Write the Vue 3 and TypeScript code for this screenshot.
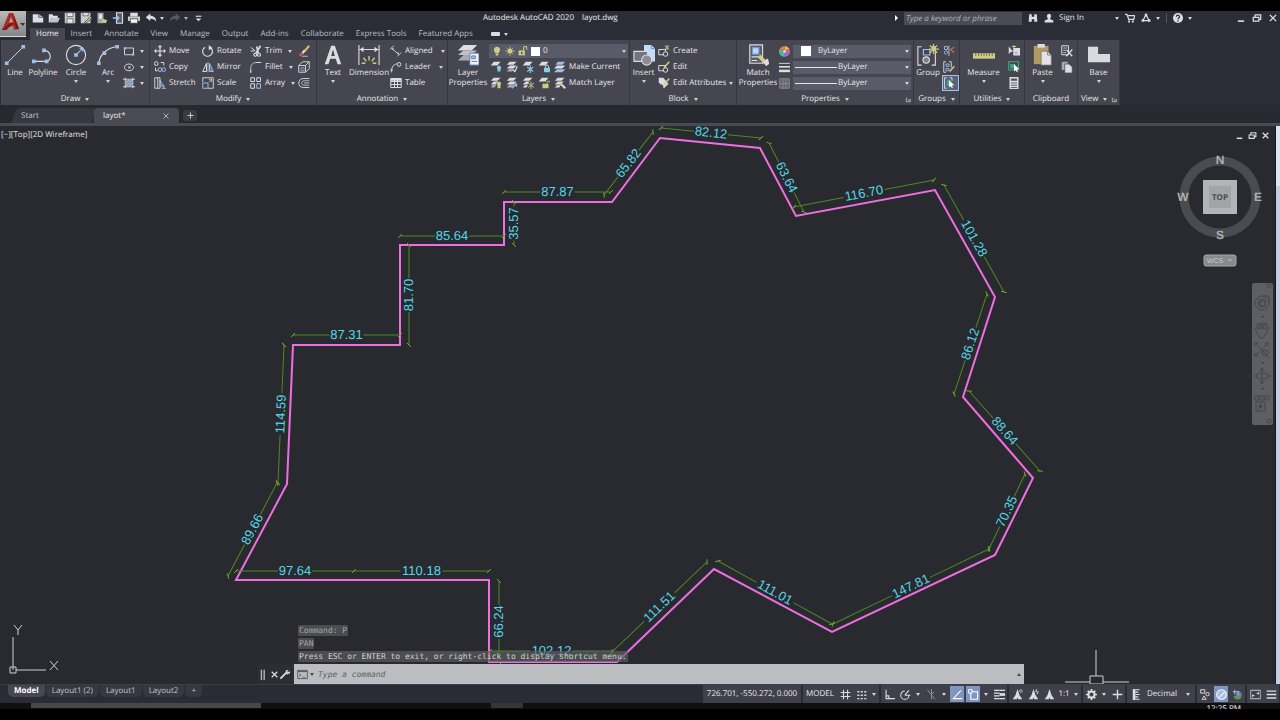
<script setup lang="ts">
import { h } from 'vue'

type Shape = [d: string, stroke?: string, fill?: string, width?: number]

const W = '#dddde1'
const B = '#9dbfe8'
const Y = '#cfcb84'
const G = '#3fa884'
const N = 'none'
const D = '#464651'

const icons: Record<string, Shape[]> = {
  // quick access
  newFile: [['M1 3h8l6 4v7H1z', N, W], ['M9 3v4h6', '#2b2e36', N, 1]],
  open: [['M1 3h5l1 2h6v3H5l-3 6H1z', N, W], ['M5 8h11l-3 6H2z', N, '#c4c4c8']],
  save: [['M1 1h14v14H1z', N, '#c9c9cd'], ['M4 1h8v5H4zM4 9h8v6H4z', '#55565c', '#ececee', 1]],
  saveAs: [['M1 1h13v14H1z', N, '#c9c9cd'], ['M4 1h7v4H4z', '#55565c', '#ececee', 1], ['M6 14l8-8 2 2-8 7z', '#3b3b3b', Y, 1]],
  openWeb: [['M2 1h8v14H2z', N, '#a5a6ab'], ['M4 3h4v6H4z', N, '#e5e5e5'], ['M9 9l6 2-2 4-5-1z', N, Y]],
  saveWeb: [['M6 1h8v14H6z', W, '#5c5d65', 1.5], ['M1 8h8M6 5l3 3-3 3', B, N, 2]],
  print: [['M3 1h10v5H3z', N, W], ['M0 6h16v6H0z', N, '#cfcfd3'], ['M3 9h10v6H3z', '#333', '#f4f4f4', 1]],
  undo: [['M7 2L1 7l6 5V9c4 0 6 1 8 4 0-5-3-8-8-8z', N, W]],
  redo: [['M9 2l6 5-6 5V9c-4 0-6 1-8 4 0-5 3-8 8-8z', N, '#62636b']],
  custom: [['M3 4h10', W, N, 2], ['M3 8h10l-5 5z', N, W]],
  // title bar
  binoculars: [['M2 2h4v4h4V2h4l1 12h-5v-4H6v4H1z', N, W]],
  person: [['M8 1a4 4 0 0 1 2 7v2l5 2v3H1v-3l5-2V8a4 4 0 0 1 2-7z', N, W]],
  cart: [['M0 2h3l3 8h8l2-6H5', W, N, 2], ['M5 12h3v3H5zM11 12h3v3h-3z', N, W]],
  tri: [['M8 3l5 9H3z', W, N, 2], ['M6 1h4v4H6zM1 10h4v4H1zM11 10h4v4h-4z', N, W]],
  help: [['M8 0a8 8 0 1 1 0 16A8 8 0 0 1 8 0z', N, W], ['M5.500 6c0-4 5-3 5 0 0 2-2.500 2-2.500 4M8 11.500v2', '#2b2e36', N, 2]],
  min: [['M3 13h10', W, N, 2.600]],
  restore: [['M2 7h9v6H2zM5 7V3h9v7h-3', W, N, 2]],
  close: [['M3 3l10 10M13 3L3 13', W, N, 2.200]],
  closeThin: [['M3 3l10 10M13 3L3 13', '#b9b9be', N, 1.800]],
  // draw
  line: [['M3 21L21 3', W, N, 1], ['M1 19h4v4H1zM19 1h4v4h-4z', N, B]],
  polyline: [['M2 19h14M12 7c10 0 10 12 3 12', W, N, 1.200], ['M0 17h4v4H0zM14 17h4v4h-4zM11 5h4v4h-4z', N, B]],
  circle: [['M12 1.500a10.500 10.500 0 1 1 0 21 10.500 10.500 0 0 1 0-21z', W, N, 1.200], ['M12 12l5-5', B, N, 1.200], ['M10 10h4v4h-4zM15 4l5 0 0 5z', N, B]],
  arc: [['M2 21C3 12 10 4 22 3', W, N, 1.200], ['M0 19h4v4H0zM6 8h4v4H6zM20 1h4v4h-4z', N, B]],
  rect: [['M2 4h12v9H2z', W, N, 1.200], ['M1 3h3v3H1zM12 11h3v3h-3z', N, B]],
  ellipse: [['M8 4c8 0 8 9 0 9s-8-9 0-9z', W, N, 1.200], ['M7 7h3v3H7z', N, B]],
  hatch: [['M3 1v14M13 1v14M0 3h16M0 13h16', W, N, 1.200], ['M4 4h8v8H4z', N, '#7795bd'], ['M4 8l4-4M4 12l8-8M8 12l4-4', W, N, 0.800]],
  // modify
  move: [['M8 2v12M2 8h12', W, N, 1.600], ['M8 0l3 3H5zM8 16l3-3H5zM0 8l3-3v6zM16 8l-3-3v6z', N, W]],
  copy: [['M3 1a2.500 2.500 0 1 1 0 5 2.500 2.500 0 0 1 0-5zM9 2h4v4M2 9v4h3', W, N, 1.300], ['M8 9a2.500 2.500 0 1 1 0 5 2.500 2.500 0 0 1 0-5zM13 9a2.500 2.500 0 1 1 0 5 2.500 2.500 0 0 1 0-5z', B, N, 1.300]],
  stretch: [['M1 1h7v14H1zM5 1v14', W, N, 1.200], ['M8 4l4 8H8zM13 10v5M10 15h6', B, N, 1.300]],
  rotate: [['M4 3a6.500 6.500 0 1 0 8 1', W, N, 1.500], ['M9 0l5 4-5 3z', N, W], ['M13 9h2v2h-2z', N, B]],
  mirror: [['M6 3v11H1z', W, N, 1.300], ['M10 3v11h5z', B, '#5b7295', 1.300], ['M8 1v14', W, N, 0.800]],
  scale: [['M1 1h14v14H8M1 1v6', W, N, 1.200], ['M1 8h7v7H1z', B, N, 1.300], ['M9 7l4-4M9 3h4v4', W, N, 1]],
  trim: [['M1 3l6 5M1 8h5', W, N, 1.300], ['M14 1L8 11M9 2l2 9', W, N, 2.200], ['M7 11a2 2 0 1 1 0 4 2 2 0 0 1 0-4zM12 11a2 2 0 1 1 0 4 2 2 0 0 1 0-4z', W, N, 1.500]],
  fillet: [['M1 15V9c0-4 3-7 7-7', B, N, 1.300], ['M8 2h7M1 12v4', W, N, 1.300]],
  array: [['M1 1h5v5H1zM9 1h5v5H9zM1 9h5v6H1z', W, N, 1.300], ['M9 9h5v6H9z', B, N, 1.300]],
  erase: [['M15 1l-6 7', '#d8b95f', N, 3], ['M9 7l-3 4', W, N, 3], ['M6 11l-4 3', '#d3555a', N, 3], ['M5 15h8', W, N, 1]],
  explode: [['M1 6h9v9H1zM1 6l5-5h9l-5 5M15 1v9l-5 5', W, N, 1.200], ['M4 9h4v4H4z', B, N, 1]],
  offset: [['M15 2H7c-8 0-8 12 0 12h8', W, N, 1.200], ['M15 5H8c-4 0-4 6 0 6h7', B, N, 1.200], ['M15 8H8', W, N, 1]],
  // annotation
  text: [['M3 22L10 2h4l7 20h-4l-2-6H9l-2 6zM10 13h4l-2-7z', N, W]],
  dimension: [['M1 1v22M23 1v22M1 6h22', W, N, 1.200], ['M2 6l4-3v6zM22 6l-4-3v6z', N, W], ['M12 13v5M6 15l3 4M18 15l-3 4M4 21l4 0M20 21h-4', Y, N, 1.500]],
  aligned: [['M2 4l10 9M5 1L0 6M15 10l-5 5', W, N, 1.200], ['M2 4l4 1-3 2zM12 13l-1-4-2 2z', N, B]],
  leader: [['M2 14C2 8 5 4 9 4', W, N, 1.300], ['M0 11h4l-2 5z', N, B], ['M12 2a2.500 2.500 0 1 1 0 5 2.500 2.500 0 0 1 0-5z', W, N, 1.300]],
  table: [['M1 2h14v12H1zM1 6h14M1 10h14M6 2v12M10 2v12', W, N, 1.300], ['M1 2h14v3H1z', N, W]],
  // layers
  layerProps: [['M7 1h15l-6 6H1z', N, W], ['M7 7h15l-6 5H1z', N, '#bfc0c5'], ['M7 12h15l-6 6H1z', N, '#a9aab0'], ['M14 10h10v13H14z', '#5a7cae', '#f1f2f5', 1], ['M16 13h4v3h-4z', '#4b76bb', '#a9c8f0', 1], ['M16 19h6', '#4b76bb', N, 1]],
  bulb: [['M8 1a5 5 0 0 1 3 9v2H5v-2a5 5 0 0 1 3-9z', N, Y], ['M6 13h4v2H6z', N, W]],
  sun: [['M8 4a4 4 0 1 1 0 8 4 4 0 0 1 0-8z', N, Y], ['M8 0v16M0 8h16M2.500 2.500l11 11M13.500 2.500l-11 11', Y, N, 1]],
  unlock: [['M1 7h10v8H1z', N, Y], ['M9 7V3c0-3 5-3 5 0v3', Y, N, 1.700], ['M5 9h2v4H5z', N, D]],
  lay1: [['M5 1h9l-4 5H1z', N, W], ['M12 6a3 3 0 0 1 2 5v3h-4v-3a3 3 0 0 1 2-5z', N, '#84cfe0']],
  lay2: [['M5 1h9l-4 4H1zM5 6h9l-4 4H1z', N, W], ['M5 10h6l-3 4H1z', N, '#a9aab0'], ['M9 12l3 2 3-7', W, N, 1.600]],
  lay3: [['M5 1h9l-4 5H1z', N, W], ['M11 6v10M7 8l8 6M15 8l-8 6', '#84cfe0', N, 1.500]],
  lay4: [['M5 1h9l-4 5H1z', N, W], ['M8 9h8v6H8z', N, '#84cfe0'], ['M10 9V7c0-2 4-2 4 0v2', W, N, 1.300]],
  lay5: [['M5 1h10l-4 4H2z', N, B], ['M4 6h11l-4 4H0z', N, W], ['M4 11h11l-4 4H0z', N, B]],
  lay6: [['M5 1h9l-4 4H1zM5 6h6l-4 4H1z', N, W], ['M4 10h5l-3 4H1z', N, '#a9aab0'], ['M12 6a3 3 0 0 1 2 5v4h-4v-4a3 3 0 0 1 2-5z', N, Y]],
  lay7: [['M5 1h9l-4 4H1zM5 6h9l-4 4H1z', N, W], ['M5 10h6l-3 4H1z', N, '#a9aab0'], ['M8 15l6-6M10 9h4v4', B, N, 1.600]],
  lay8: [['M5 1h9l-4 4H1zM5 6h5l-3 4H1zM4 11h4l-2 3H1z', N, W], ['M12 6v10M8 8l8 6M16 8l-8 6', Y, N, 1.200]],
  lay9: [['M5 1h9l-4 5H1z', N, W], ['M6 9h8v6H6z', N, Y], ['M12 9V7c0-2 4-2 4 0v1', Y, N, 1.300]],
  lay10: [['M5 1h9l-4 4H1zM5 6h8l-4 4H1zM4 11h5l-2 3H1z', N, W], ['M8 8l7 7', W, N, 2.600], ['M8 8l2 2', Y, N, 2.600]],
  // block
  insert: [['M12 1h8l4 4v14H12z', N, '#c3dcf7'], ['M20 1v4h4', '#6c8cb5', N, 1], ['M1 8h15v11H1z', W, '#73747d', 1.200], ['M15 12a5.500 5.500 0 1 1 0 11 5.500 5.500 0 0 1 0-11z', W, '#8b8c94', 1.200]],
  create: [['M1 6h9v7H1z', W, N, 1.300], ['M10 9a3 3 0 1 1 0 6 3 3 0 0 1 0-6z', W, D, 1.300], ['M12 0v7M9 1l6 5M15 1L9 6', Y, N, 1.200]],
  edit: [['M1 6h9v7H1z', W, N, 1.300], ['M10 9a3 3 0 1 1 0 6 3 3 0 0 1 0-6z', W, D, 1.300], ['M8 9l7-8', Y, N, 2]],
  attributes: [['M1 1h6l7 8-6 6-7-8z', N, W], ['M8 10l7-8', Y, N, 2], ['M4 10l3 3', D, N, 1.500]],
  // properties
  match: [['M3 1h14v20H3z', W, '#5d5e68', 1.200], ['M6 4h7v7H6z', '#6c9bd8', '#bcd8f8', 1.200], ['M5 14h9M5 18h6', W, N, 1.300], ['M13 13l6 6', Y, N, 4], ['M18 21l5-4M20 23l4-3', W, N, 3]],
  wheel: [['M8 8V0a8 8 0 0 1 7 4z', N, '#e8b55b'], ['M8 8l7-4a8 8 0 0 1 0 8z', N, '#d9647c'], ['M8 8l7 4a8 8 0 0 1-7 4z', N, '#a06cd0'], ['M8 8v8a8 8 0 0 1-7-4z', N, '#4fb6cf'], ['M8 8l-7 4a8 8 0 0 1 0-8z', N, '#57b978'], ['M8 8L1 4a8 8 0 0 1 7-4z', N, '#e07a55'], ['M8 6a2 2 0 1 1 0 4 2 2 0 0 1 0-4z', N, W]],
  weight: [['M0 2h16', W, N, 1.300], ['M0 7h16', W, N, 2.300], ['M0 13h16', W, N, 3.600]],
  ltype: [['M1 1h14v14H1zM6 1v14M10 1v14M1 8h14', '#8b8b92', '#66666f', 1.200]],
  // groups
  group: [['M5 3H1v20h4M16 3h4v20h-4', W, N, 1.200], ['M7 6h7v6H7z', B, N, 1.300], ['M10 14a3.500 3.500 0 1 1 0 7 3.500 3.500 0 0 1 0-7z', W, '#7e7f88', 1.200], ['M18 0v11M13 5.500h11M14 1.500l8 8M22 1.500l-8 8', Y, N, 1.400]],
  ungroup: [['M2 2h4v4H2zM2 9a2 2 0 1 1 4 2 2 2 0 0 1-4-2', B, N, 1.200], ['M8 1v14', W, N, 1], ['M10 6l5-3M10 6l5 4', '#d26a6a', N, 1.400]],
  groupEdit: [['M4 1H1v14h3M8 1h3v8', W, N, 1.200], ['M4 4h4v3H4zM4 10h4v3H4z', B, N, 1.200], ['M9 14l6-7', Y, N, 2]],
  groupSel: [['M5 1H2v14h3M9 1h3v4', W, N, 1.200], ['M5 4h4v8H5z', N, G], ['M8 4v10l2-2 2 3 1-1-1-3h3z', N, '#fff']],
  // utilities and clipboard
  measure: [['M0 10h24v6H0z', N, Y], ['M3 10v3M6 10v3M9 10v3M12 10v3M15 10v3M18 10v3M21 10v3', '#6c6a45', N, 1]],
  quick: [['M7 4h9v10H7z', N, W], ['M1 2v10l3-3h3z', N, W], ['M8 0v5M5 2h6', Y, N, 1.300], ['M9 9h4v3H9z', N, B]],
  selAll: [['M1 1h13v11H1z', G, N, 1.600], ['M3 4h6v6H3z', N, G], ['M8 4v10l2-2 2 3 1-1-1-3h3z', N, '#fff']],
  calc: [['M2 0h12v16H2z', N, W], ['M4 2h8v3H4z', N, '#55555f'], ['M4 8h8M4 11h8M4 14h8', '#55555f', N, 1.200]],
  paste: [['M2 2h16v20H2z', N, '#b09a64'], ['M6 0h8v4H6z', N, W], ['M10 8h7l4 4v11H10z', '#777', '#e2e2e4', 0.800], ['M17 8v4h4', '#777', N, 1]],
  cut: [['M1 1h9v12H1z', W, N, 1.300], ['M3 4h5M3 7h5M3 10h4', W, N, 1], ['M8 7l7 8M15 6l-8 9', W, N, 1.600]],
  copyClip: [['M1 1h8v11H1z', N, '#a9aab0'], ['M5 4h6l4 4v8H5z', D, W, 1]],
  base: [['M0 3h11v8h13v9H0z', N, '#d9dadd']],
  launcher: [['M3 4v9h9M6 6l6 6M12 7v5', W, N, 1.500]],
  // command line
  grip: [['M5 1v15M9 1v15', '#b5b5ba', N, 2]],
  wrench: [['M2 14l8-8', W, N, 2.600], ['M14 1l-4 1-1 4 3 2 4-2 0-3-3 2-1-1z', N, W]],
  prompt: [['M1 2h14v12H1z', '#5e5e63', N, 1.400], ['M1 3.500h14', '#5e5e63', N, 2], ['M3 7l3 2-3 2M8 12h4', '#5e5e63', N, 1.200]],
  // status bar
  grid: [['M5 1v14M11 1v14M1 5h14M1 11h14', W, N, 1.500]],
  snap: [['M2 3h3v2H2zM7 3h3v2H7zM12 3h3v2h-3zM2 8h3v2H2zM7 8h3v2H7zM12 8h3v2h-3zM2 13h3v2H2zM7 13h3v2H7zM12 13h3v2h-3z', N, W]],
  ortho: [['M3 1v13h13M3 10h4v4', W, N, 1.600]],
  polar: [['M7 3a6 6 0 1 0 6 6M7 9h8M7 9l6-7', W, N, 1.500]],
  iso: [['M2 1l11 14M8 0v15M12 4L8 8', '#8f9097', N, 1.400]],
  track: [['M13 2L2 14h13', '#fff', N, 1.500]],
  osnap: [['M4 4h10v11H4z', '#fff', N, 1.600], ['M1 1h5v5H1z', '#fff', '#7f95c2', 1.400]],
  lweight: [['M0 2h8M0 6h8M0 10h8M0 14h8', W, N, 1.800], ['M8 2h8M8 14h8', W, N, 1.800], ['M8 8h8', W, N, 4]],
  annoVis: [['M8 0l3 9 4 6H9l-1-3-1 3H1l4-6z', N, W], ['M13 1a2 2 0 1 1 0 4 2 2 0 0 1 0-4z', W, N, 1]],
  annoAuto: [['M8 0l3 9 4 6H9l-1-3-1 3H1l4-6z', N, W], ['M13 0l-2 4h4l-2 4', W, N, 1.200]],
  anno: [['M8 0l3 9 4 6H9l-1-3-1 3H1l4-6z', N, W]],
  gear: [['M8 3.500a4.500 4.500 0 1 1 0 9 4.500 4.500 0 0 1 0-9z', W, N, 3], ['M8 0v3M8 13v3M0 8h3M13 8h3M2.500 2.500l2 2M11.500 11.500l2 2M13.500 2.500l-2 2M4.500 11.500l-2 2', W, N, 2.400]],
  plus: [['M8 1v14M1 8h14', W, N, 2]],
  units: [['M4 0h4v16H4z', N, W], ['M8 1h6M8 4.500h4M8 8h6M8 11.500h4M8 15h6', W, N, 1.600]],
  quickProps: [['M1 1h6v5H1zM11 5a2.500 2.500 0 1 1 0 5 2.500 2.500 0 0 1 0-5zM6 10l3 5H3z', W, N, 1.400]],
  isolate: [['M8 1a7 7 0 1 1 0 14A7 7 0 0 1 8 1z', '#fff', '#a8bbe2', 1.500], ['M5 12l7-7', '#fff', N, 1.500]],
  hardware: [['M6 5h8v6H6z', N, '#5a83c8'], ['M2 11c3-2 9-2 12 1l-3 3H5z', N, '#5d9a4d'], ['M4 1v7M1 4h10M9 3v6', B, N, 1.500]],
  clean: [['M1 2h14v12H1z', '#a9aab0', N, 1.500], ['M9 7l4-3v4zM7 9l-4 3V8z', N, W]],
  menu: [['M1 3h14M1 8h14M1 13h14', W, N, 2]],
}

const Glyph = (props: { name: string; size?: number; box?: number }) => {
  const box = props.box ?? 16
  const size = props.size ?? 10
  return h(
    'svg',
    { width: size, height: size, viewBox: `0 0 ${box} ${box}`, 'aria-hidden': 'true', class: 'glyph' },
    icons[props.name].map(([d, stroke = W, fill = N, width = 1]) =>
      h('path', { d, stroke, fill, 'stroke-width': width }),
    ),
  )
}
Glyph.props = ['name', 'size', 'box']

const quickAccess = ['newFile', 'open', 'save', 'saveAs', 'openWeb', 'saveWeb', 'print']
const ribbonTabs = ['Home', 'Insert', 'Annotate', 'View', 'Manage', 'Output', 'Add-ins', 'Collaborate', 'Express Tools', 'Featured Apps']

interface Tool { icon: string; label?: string; menu?: boolean; name?: string; on?: boolean }
interface Panel { id: string; title: string; menu?: boolean; launcher?: boolean; big: Tool[]; columns: Tool[][] }

const panels: Panel[] = [
  {
    id: 'draw', title: 'Draw', menu: true,
    big: [{ icon: 'line', label: 'Line' }, { icon: 'polyline', label: 'Polyline' }, { icon: 'circle', label: 'Circle', menu: true }, { icon: 'arc', label: 'Arc', menu: true }],
    columns: [[{ icon: 'rect', name: 'Rectangle', menu: true }, { icon: 'ellipse', name: 'Ellipse', menu: true }, { icon: 'hatch', name: 'Hatch', menu: true }]],
  },
  {
    id: 'modify', title: 'Modify', menu: true, big: [],
    columns: [
      [{ icon: 'move', label: 'Move' }, { icon: 'copy', label: 'Copy' }, { icon: 'stretch', label: 'Stretch' }],
      [{ icon: 'rotate', label: 'Rotate' }, { icon: 'mirror', label: 'Mirror' }, { icon: 'scale', label: 'Scale' }],
      [{ icon: 'trim', label: 'Trim', menu: true }, { icon: 'fillet', label: 'Fillet', menu: true }, { icon: 'array', label: 'Array', menu: true }],
      [{ icon: 'erase', name: 'Erase' }, { icon: 'explode', name: 'Explode' }, { icon: 'offset', name: 'Offset' }],
    ],
  },
  {
    id: 'annotation', title: 'Annotation', menu: true,
    big: [{ icon: 'text', label: 'Text', menu: true }, { icon: 'dimension', label: 'Dimension' }],
    columns: [[{ icon: 'aligned', label: 'Aligned', menu: true }, { icon: 'leader', label: 'Leader', menu: true }, { icon: 'table', label: 'Table' }]],
  },
  { id: 'layers', title: 'Layers', menu: true, big: [{ icon: 'layerProps', label: 'Layer\nProperties' }], columns: [] },
  {
    id: 'block', title: 'Block', menu: true,
    big: [{ icon: 'insert', label: 'Insert', menu: true }],
    columns: [[{ icon: 'create', label: 'Create' }, { icon: 'edit', label: 'Edit' }, { icon: 'attributes', label: 'Edit Attributes', menu: true }]],
  },
  { id: 'properties', title: 'Properties', menu: true, launcher: true, big: [{ icon: 'match', label: 'Match\nProperties' }], columns: [] },
  {
    id: 'groups', title: 'Groups', menu: true,
    big: [{ icon: 'group', label: 'Group' }],
    columns: [[{ icon: 'ungroup', name: 'Ungroup' }, { icon: 'groupEdit', name: 'Group edit' }, { icon: 'groupSel', name: 'Group selection', on: true }]],
  },
  {
    id: 'utilities', title: 'Utilities', menu: true,
    big: [{ icon: 'measure', label: 'Measure', menu: true }],
    columns: [[{ icon: 'quick', name: 'Quick select' }, { icon: 'selAll', name: 'Select all' }, { icon: 'calc', name: 'Calculator' }]],
  },
  {
    id: 'clipboard', title: 'Clipboard',
    big: [{ icon: 'paste', label: 'Paste', menu: true }],
    columns: [[{ icon: 'cut', name: 'Cut' }, { icon: 'copyClip', name: 'Copy clip' }]],
  },
  { id: 'view', title: 'View', menu: true, launcher: true, big: [{ icon: 'base', label: 'Base', menu: true }], columns: [] },
]

const layerRows: Tool[][] = [
  [{ icon: 'lay1', name: 'Off' }, { icon: 'lay2', name: 'Isolate' }, { icon: 'lay3', name: 'Freeze' }, { icon: 'lay4', name: 'Lock' }, { icon: 'lay5', label: 'Make Current' }],
  [{ icon: 'lay6', name: 'On' }, { icon: 'lay7', name: 'Unisolate' }, { icon: 'lay8', name: 'Thaw' }, { icon: 'lay9', name: 'Unlock' }, { icon: 'lay10', label: 'Match Layer' }],
]
const propertyRows = [
  { icon: 'wheel', name: 'Object color', swatch: true },
  { icon: 'weight', name: 'Lineweight', swatch: false },
  { icon: 'ltype', name: 'Linetype', swatch: false },
]

const outline: [number, number][] = [
  [236, 580], [489, 580], [489, 662], [617, 662], [714, 569], [832, 632], [995, 555], [1033, 478],
  [963, 397], [995, 297], [935, 190], [796, 216], [760, 148], [660, 138], [612, 202], [504, 202],
  [504, 245], [400, 245], [400, 345], [293, 345], [287, 484],
]
const outlinePoints = outline.map((p) => p.join(',')).join(' ')

// Each dimension runs in its text's reading direction.
const dimensionData: [number, number, number, number, string][] = [
  [661, 128, 761, 138, '82.12'], [604, 195, 653, 132, '65.82'], [769, 143, 804, 212, '63.64'],
  [794, 207, 934, 180, '116.70'], [944, 185, 1004, 292, '101.28'], [954, 394, 987, 294, '86.12'],
  [969, 391, 1040, 471, '88.64'], [989, 549, 1025, 474, '70.35'], [833, 624, 989, 549, '147.81'],
  [718, 561, 832, 624, '111.01'], [612, 652, 707, 562, '111.51'], [490, 651, 613, 651, '102.12'],
  [499, 662, 499, 581, '66.24'], [236, 571, 354, 571, '97.64'], [354, 571, 489, 571, '110.18'],
  [228, 576, 277, 483, '89.66'], [278, 483, 284, 345, '114.59'], [293, 335, 400, 335, '87.31'],
  [409, 345, 409, 245, '81.70'], [400, 236, 504, 236, '85.64'], [514, 245, 514, 202, '35.57'],
  [504, 192, 611, 192, '87.87'],
]
const dimensions = dimensionData.map(([x1, y1, x2, y2, text]) => {
  const length = Math.hypot(x2 - x1, y2 - y1)
  const gap = text.length === 5 ? 17 : 21
  return {
    text,
    place: `translate(${(x1 + x2) / 2} ${(y1 + y2) / 2}) rotate(${(Math.atan2(y2 - y1, x2 - x1) * 180) / Math.PI})`,
    lines: `M${-length / 2} 0H${-gap}M${gap} 0H${length / 2}`,
    ticks: `M${-length / 2 - 2} 2l4-4M${length / 2 - 2} 2l4-4`,
  }
})

const history = ['Command: P', 'PAN', 'Press ESC or ENTER to exit, or right-click to display shortcut menu.']
const layouts = ['Model', 'Layout1 (2)', 'Layout1', 'Layout2', '+']

interface Status { icon?: string; text?: string; kind?: string; on?: boolean; name?: string }
const statusGroups: Status[][] = [
  [{ text: '726.701, -550.272, 0.000', kind: 'coords' }],
  [{ text: 'MODEL', kind: 'space' }, { icon: 'grid', name: 'Grid' }, { icon: 'snap', name: 'Snap' }, { kind: 'drop', name: 'Snap options' }],
  [{ icon: 'ortho', name: 'Ortho' }, { icon: 'polar', name: 'Polar' }, { kind: 'drop', name: 'Polar options' }, { icon: 'iso', name: 'Isodraft' }, { kind: 'drop', name: 'Isodraft options' }, { icon: 'track', on: true, name: 'Tracking' }, { icon: 'osnap', on: true, name: 'Object snap' }, { kind: 'drop', name: 'Object snap options' }, { icon: 'lweight', name: 'Lineweight' }],
  [{ icon: 'annoVis', name: 'Annotation visibility' }, { icon: 'annoAuto', name: 'Auto scale' }, { icon: 'anno', name: 'Annotation scale' }, { text: '1:1', kind: 'ratio' }, { kind: 'drop', name: 'Scale list' }],
  [{ icon: 'gear', name: 'Workspace' }, { kind: 'drop', name: 'Workspace list' }, { icon: 'plus', name: 'Annotation monitor' }],
  [{ icon: 'units', name: 'Units' }, { text: 'Decimal', kind: 'units' }, { kind: 'drop', name: 'Units list' }],
  [{ icon: 'quickProps', name: 'Quick properties' }, { icon: 'isolate', on: true, name: 'Isolate objects' }, { icon: 'hardware', name: 'Hardware acceleration' }],
  [{ icon: 'clean', name: 'Clean screen' }, { icon: 'menu', name: 'Customization' }],
]
</script>

<template>
  <div class="screen">
    <header class="header">
      <button class="logo" aria-label="Application menu">
        <svg width="26" height="26" viewBox="0 0 26 26" aria-hidden="true">
          <path d="M2 19L9 2h4l6 16-5 1-1-4-5 1-2 3zM9 12l4-1-2-5z" fill="#b02a24" fill-rule="evenodd" />
          <path d="M2 19l8-7 4 0-8 7zM13 2l6 16-3 0z" fill="#7d1512" />
          <path d="M20 12h5l-2 3z" fill="#333" />
        </svg>
      </button>
      <div class="head-rows">
        <div class="titlebar">
          <div class="quick">
            <button v-for="q in quickAccess" :key="q" class="quick-btn" :aria-label="q"><Glyph :name="q" :size="12" /></button>
            <button class="undo-btn" aria-label="Undo"><Glyph name="undo" :size="12" /><i class="caret" /></button>
            <button class="undo-btn dim" aria-label="Redo"><Glyph name="redo" :size="12" /><i class="caret" /></button>
            <button class="quick-btn" aria-label="Customize"><Glyph name="custom" :size="9" /></button>
          </div>
          <h1 class="doc-title"><span>Autodesk AutoCAD 2020</span><span>layot.dwg</span></h1>
          <div class="title-tools">
            <i class="side-caret" />
            <input class="search" type="text" aria-label="Search" placeholder="Type a keyword or phrase" />
            <button aria-label="Find"><Glyph name="binoculars" /></button>
            <button class="signin"><Glyph name="person" /><span>Sign In</span><i class="caret" /></button>
            <button aria-label="Store"><Glyph name="cart" /></button>
            <button aria-label="Apps"><Glyph name="tri" /><i class="caret" /></button>
            <button class="help" aria-label="Help"><Glyph name="help" /><i class="caret" /></button>
            <div class="window-btns">
              <button aria-label="Minimize"><Glyph name="min" /></button>
              <button aria-label="Restore"><Glyph name="restore" /></button>
              <button aria-label="Close"><Glyph name="close" /></button>
            </div>
          </div>
        </div>
        <nav class="ribbon-tabs">
          <button v-for="(t, i) in ribbonTabs" :key="t" :class="['ribbon-tab', { current: i === 0 }]">{{ t }}</button>
          <button class="ribbon-toggle" aria-label="Minimize ribbon"><i class="pill" /><i class="caret" /></button>
        </nav>
      </div>
    </header>

    <section class="ribbon">
      <div v-for="p in panels" :key="p.id" :class="['panel', p.id]">
        <div class="panel-body">
          <button v-for="b in p.big" :key="b.icon" class="big">
            <Glyph :name="b.icon" :size="22" :box="24" />
            <span>{{ b.label }}</span>
            <i v-if="b.menu" class="caret" />
          </button>
          <div v-for="(c, i) in p.columns" :key="i" class="column">
            <button v-for="t in c" :key="t.icon" :class="['tool', { on: t.on }]" :aria-label="t.name">
              <Glyph :name="t.icon" :size="12" /><span v-if="t.label">{{ t.label }}</span><i v-if="t.menu" class="caret" />
            </button>
          </div>
          <div v-if="p.id === 'layers'" class="column">
            <div class="combo layer-combo">
              <Glyph name="bulb" /><Glyph name="sun" /><Glyph name="unlock" /><i class="swatch" />
              <select aria-label="Layer"><option>0</option></select><i class="caret" />
            </div>
            <div v-for="(r, i) in layerRows" :key="i" class="layer-row">
              <button v-for="t in r" :key="t.icon" class="tool" :aria-label="t.name"><Glyph :name="t.icon" :size="12" /><span v-if="t.label">{{ t.label }}</span></button>
            </div>
          </div>
          <div v-if="p.id === 'properties'" class="column">
            <div v-for="r in propertyRows" :key="r.name" class="property">
              <Glyph :name="r.icon" :size="11" />
              <div class="combo">
                <i v-if="r.swatch" class="swatch wide" /><i v-else class="stroke-sample" />
                <select :aria-label="r.name"><option>ByLayer</option></select><i class="caret" />
              </div>
            </div>
          </div>
        </div>
        <div class="panel-title"><span>{{ p.title }}</span><i v-if="p.menu" class="caret" /><Glyph v-if="p.launcher" name="launcher" :size="7" class="launcher" /></div>
      </div>
    </section>

    <nav class="file-tabs">
      <button class="file-tab start"><span>Start</span></button>
      <button class="file-tab current"><span>layot*</span><Glyph name="closeThin" :size="8" /></button>
      <button class="add-tab" aria-label="New drawing"><Glyph name="plus" :size="7" /></button>
    </nav>

    <main class="canvas">
      <svg class="drawing" viewBox="0 126 1280 558" preserveAspectRatio="xMinYMin slice" role="img" aria-label="Site outline with dimensions">
        <polygon :points="outlinePoints" class="outline" />
        <g v-for="d in dimensions" :key="d.text" :transform="d.place">
          <path :d="d.lines" class="dim-line" />
          <path :d="d.ticks" class="dim-tick" />
          <text class="dim-text" y="4">{{ d.text }}</text>
        </g>
        <path d="M13 637V670M16 670H46M10 667h6v6h-6zM14 625l4 5 4-5M18 630v5M50 661l8 9M58 661l-8 9" class="ucs" />
        <path d="M1096 650V676M1065 682H1090M1103 682H1129M1090 676h13v8h-13z" class="ucs" />
      </svg>
      <div class="view-label">[−][Top][2D Wireframe]</div>
      <div class="doc-btns">
        <button aria-label="Minimize drawing"><Glyph name="min" :size="9" /></button>
        <button aria-label="Restore drawing"><Glyph name="restore" :size="9" /></button>
        <button aria-label="Close drawing"><Glyph name="close" :size="9" /></button>
      </div>
      <svg class="cube" viewBox="0 0 92 120" width="92" height="120" role="img" aria-label="View cube">
        <circle cx="46" cy="46" r="36" fill="none" stroke="#4b4c50" stroke-width="9" />
        <rect x="29" y="29" width="34" height="34" fill="#b3b4b5" />
        <rect x="35" y="35" width="22" height="22" fill="#a3a4a6" />
        <text x="46" y="49" class="cube-top">TOP</text>
        <text x="46" y="13" class="compass">N</text>
        <text x="46" y="88" class="compass">S</text>
        <text x="9" y="50" class="compass">W</text>
        <text x="84" y="50" class="compass">E</text>
        <rect x="30" y="104" width="32" height="11" rx="2" fill="#88898b" stroke="#a5a6a8" />
        <text x="41" y="112" class="wcs">WCS</text>
        <path d="M53 108h6l-3 3z" fill="#a5a6a8" />
      </svg>
      <svg class="navbar" viewBox="0 0 21 142" width="21" height="142" role="img" aria-label="Navigation bar">
        <rect width="21" height="142" rx="2" fill="#5d5f62" />
        <g fill="none" stroke="#45474a" stroke-width="1">
          <circle cx="17" cy="3" r="2" /><circle cx="17" cy="138" r="2" />
          <circle cx="10" cy="20" r="7" /><circle cx="10" cy="20" r="4" /><path d="M8 18h5v5H8zM11 13h6v6" />
          <path d="M5 50l-2-5 2-1 2 3-2-6 2-1 2 6V40h2v6l2-6 2 1-2 6 3-3 1 1-4 7-2 3H8z" />
          <path d="M4 60l12 14M16 60L3 73M3 63v-3h3M13 60h3v3M3 70v3h3" /><circle cx="13" cy="70" r="3" /><path d="M15 73l3 3" />
          <path d="M10 86v14M8 88l2-3 2 3M8 98l2 3 2-3M4 93c0-4 13-4 13 0s-13 4-13 0M2 93h4M15 93h4" />
          <path d="M3 113h4v4H3zM8 113h4v4H8zM13 113h4v4h-4zM4 119h9v9H4z" />
        </g>
        <path d="M7 121l4 2-4 3zM9 33h4l-2 2zM9 79h4l-2 2zM9 105h4l-2 2z" fill="#3f4144" />
      </svg>
      <div class="edge" />
      <div class="command">
        <p v-for="l in history" :key="l" class="history"><span>{{ l }}</span></p>
        <div class="command-line">
          <div class="command-tools">
            <Glyph name="grip" :size="11" /><button aria-label="Close command line"><Glyph name="close" :size="9" /></button><button aria-label="Customize command line"><Glyph name="wrench" :size="11" /></button>
          </div>
          <div class="command-field">
            <Glyph name="prompt" :size="11" /><i class="caret dark" />
            <input type="text" aria-label="Command" placeholder="Type a command" />
            <i class="caret dark up" />
          </div>
        </div>
      </div>
    </main>

    <footer class="status">
      <nav class="layouts">
        <button v-for="(l, i) in layouts" :key="l" :class="['layout', { current: i === 0 }]">{{ l }}</button>
      </nav>
      <div class="status-tools">
        <div v-for="(g, i) in statusGroups" :key="i" class="status-group">
          <button v-for="(s, j) in g" :key="j" :class="['cell', s.kind, { on: s.on }]" :aria-label="s.name">
            <Glyph v-if="s.icon" :name="s.icon" :size="11" /><i v-else-if="s.kind === 'drop'" class="caret" /><template v-else>{{ s.text }}</template>
          </button>
        </div>
      </div>
    </footer>
    <div class="taskbar"><i class="task first" /><i class="task second" /><span class="clock">12:25 PM</span></div>
  </div>
</template>

<style>
body { margin: 0; background: #000; }
</style>

<style scoped>
.screen {
  display: flex; flex-direction: column; box-sizing: border-box; min-height: 100vh; padding: 11px 0;
  overflow: hidden; background: #000; color: #e8e8ec;
  font: 8px/12px "Open Sans", "Noto Sans", sans-serif;
  text-rendering: geometricPrecision;
}
button, input, select { margin: 0; padding: 0; border: 0; background: none; color: inherit; font: inherit; outline: 0; text-rendering: inherit; }
button { display: flex; align-items: center; white-space: nowrap; }
.glyph { display: block; flex: none; }
.caret { flex: none; width: 0; height: 0; border: solid transparent; border-width: 3px 2px 0; border-top-color: #d3d3d7; }
.header { display: flex; background: #2a2d35; }
.logo { width: 26px; height: 26px; background: linear-gradient(#b9babb, #85868a); border-bottom: 1px solid #ddd; box-sizing: border-box; }
.head-rows { flex: 1; min-width: 0; }
.titlebar { display: flex; height: 14px; align-items: center; }
.quick { display: flex; flex: none; width: 457px; align-items: center; padding-left: 4px; box-sizing: border-box; }
.quick-btn { width: 16px; justify-content: center; }
.undo-btn { gap: 3px; padding: 0 3px; width: 24px; box-sizing: border-box; }
.undo-btn.dim { opacity: .8; }
.doc-title { display: flex; flex: 1; gap: 8px; margin: 0; font-size: 8px; font-weight: 400; color: #ececef; white-space: nowrap; }
.title-tools { display: flex; flex: none; align-items: center; gap: 6px; padding-right: 2px; }
.title-tools button { gap: 5px; }
.side-caret { border: solid transparent; border-width: 3px 0 3px 3px; border-left-color: #fff; }
.search { width: 118px; height: 13px; padding: 0 2px; box-sizing: border-box; background: #4a4b55; font-style: italic; }
.search::placeholder { color: #b5b5bb; opacity: 1; }
.signin { width: 75px; }
.signin .caret { margin-left: auto; }
.title-tools .help { padding-left: 6px; border-left: 1px solid #55565e; }
.window-btns { display: flex; gap: 6px; margin-left: 38px; }
.ribbon-tabs { display: flex; height: 12px; margin-top: 3px; padding-left: 4px; }
.ribbon-tab { padding: 0 6px; color: #bdbdc2; }
.ribbon-tab.current { background: #474751; color: #f0f0f2; }
.ribbon-toggle { gap: 4px; padding: 0 12px; }
.pill { width: 9px; height: 4px; border-radius: 1px; background: #dcdce0; }

.ribbon { display: flex; height: 65px; background: #2a2d35; padding-left: 1px; }
.panel { position: relative; display: flex; flex-direction: column; flex: none; box-sizing: border-box; background: #464651; border-right: 1px solid #353640; }
.panel-body { display: flex; height: 51px; padding-top: 3px; box-sizing: border-box; }
.panel-title { display: flex; height: 14px; align-items: center; justify-content: center; gap: 5px; padding-top: 2px; box-sizing: border-box; }
.launcher { position: absolute; right: 1px; }
.big { flex: none; flex-direction: column; align-self: stretch; padding-top: 1px; }
.big span { line-height: 10px; margin-top: 2px; white-space: pre; text-align: center; }
.big .caret { margin-top: 2px; }
.column { display: flex; flex-direction: column; flex: 1; min-width: 0; }
.tool { gap: 3px; height: 16px; padding: 0 1px; }
.tool .caret { margin-left: 5px; }
.tool.on { background: #55657d; box-shadow: inset 0 0 0 1px #a9c3e6; }
.draw { width: 149px; }
.draw .big { width: 28px; }
.draw .big:nth-child(3) { width: 38px; }
.draw .big:nth-child(4) { width: 26px; }
.draw .column { padding-left: 1px; }
.draw .tool .caret { margin-left: 2px; }
.modify { width: 167px; }
.modify .panel-body { padding-left: 3px; }
.modify .column { flex: none; width: 48px; }
.modify .column:last-child { width: 18px; }
.modify .tool .caret { margin-left: 3px; }
.annotation { width: 131px; }
.annotation .big { width: 32px; }
.annotation .big:nth-child(2) { width: 40px; }
.layers { width: 182px; }
.layers .big { width: 40px; }
.block { width: 107px; }
.block .big { width: 27px; }
.block .tool .caret { margin-left: 0; }
.properties { width: 177px; }
.properties .big { width: 42px; }
.groups { width: 46px; }
.groups .big { width: 28px; }
.utilities { width: 65px; }
.utilities .big { width: 47px; }
.clipboard { width: 53px; }
.clipboard .big { width: 35px; }
.view { width: 42px; }
.view .big { width: 41px; }
.view .panel-title { justify-content: flex-start; padding-left: 3px; }
.combo { display: flex; flex: 1; align-items: center; height: 13px; min-width: 0; margin-right: 2px; padding-right: 2px; background: #5a5b68; box-sizing: border-box; }
.combo select { flex: 1; min-width: 0; height: 12px; appearance: none; }
.layer-combo { flex: none; height: 14px; margin: 1px 1px 1px 1px; padding-left: 3px; gap: 3px; }
.swatch { width: 9px; height: 9px; background: #fff; }
.swatch.wide { width: 10px; height: 10px; margin: 0 7px 0 8px; }
.stroke-sample { width: 42px; height: 1px; margin: 0 1px 0 2px; background: #e4e4e6; }
.layer-row { display: flex; }
.layer-row .tool { flex: none; min-width: 16px; padding: 0 2px; }
.property { display: flex; height: 16px; align-items: center; gap: 3px; }

.file-tabs { display: flex; align-items: flex-end; height: 18px; padding-left: 14px; background: #272930; border-bottom: 3px solid #4a4a54; }
.file-tab { position: relative; z-index: 0; height: 15px; }
.file-tab::before { content: ""; position: absolute; z-index: -1; inset: 0; background: #363740; border-radius: 4px 4px 0 0; transform: skewX(-20deg); }
.file-tab.start { width: 80px; padding-left: 7px; color: #c4c4c8; }
.file-tab.current { width: 85px; justify-content: space-between; padding: 0 9px; box-sizing: border-box; }
.file-tab.current::before { background: #4a4a54; transform: none; }
.add-tab { height: 11px; width: 14px; margin: 0 0 2px 4px; justify-content: center; background: #3a3b44; border-radius: 3px; }

.canvas { position: relative; flex: 1; min-height: 300px; background: #292a2f; overflow: hidden; }
.drawing { position: absolute; inset: 0; width: 100%; height: 100%; }
.outline { fill: none; stroke: #ee6fe0; stroke-width: 2; }
.dim-line { stroke: #4c8a22; stroke-width: 1; fill: none; }
.dim-tick { stroke: #6cab26; stroke-width: 1; fill: none; }
.dim-text { fill: #55d6e6; font: 13px "Liberation Sans", sans-serif; text-anchor: middle; }
.ucs { fill: none; stroke: #cfcfd2; stroke-width: 1; }
.view-label { position: absolute; left: 1px; top: 3px; color: #e6e6e8; }
.doc-btns { position: absolute; right: 10px; top: 5px; display: flex; gap: 4px; }
.cube { position: absolute; right: 14px; top: 25px; }
.compass { fill: #aeb0b2; font: bold 12px "Liberation Sans", sans-serif; text-anchor: middle; }
.cube-top { fill: #4a4b4e; font: bold 8px "Open Sans", sans-serif; text-anchor: middle; }
.wcs { fill: #c9cacb; font: 7px "Liberation Sans", sans-serif; text-anchor: middle; }
.navbar { position: absolute; right: 7px; top: 157px; }
.edge { position: absolute; right: 0; top: 0; bottom: 0; width: 4px; background: linear-gradient(#dfe5f5 60px, #c6cde0 60px); border-left: 1px solid #14172b; }
.command { position: absolute; left: 258px; right: 256px; bottom: 0; font-family: "DejaVu Sans Mono", "Liberation Mono", monospace; }
.history { display: flex; height: 13px; margin: 0 0 0 40px; align-items: center; color: #a5a5a7; }
.history span { height: 11px; line-height: 11px; padding: 0 1px; border-radius: 1px; background: rgba(95, 95, 98, .68); white-space: nowrap; }
.history:nth-child(3) { color: #d0d0d2; }
.command-line { display: flex; height: 20px; margin-top: 1px; }
.command-tools { display: flex; width: 36px; align-items: center; justify-content: space-between; padding-right: 4px; box-sizing: border-box; background: #2c2e36; }
.command-field { display: flex; flex: 1; align-items: center; gap: 2px; padding: 0 3px 0 3px; background: #bcbdc0; }
.command-field input { flex: 1; min-width: 0; height: 16px; padding-left: 2px; font-style: italic; }
.command-field input::placeholder { color: #606064; opacity: 1; }
.caret.dark { border-top-color: #4a4a4e; }
.caret.up { transform: rotate(180deg); }

.status { display: flex; justify-content: space-between; height: 19px; background: #292c35; border-top: 1px solid #3c3e47; box-sizing: border-box; }
.layouts { display: flex; gap: 1px; padding-left: 8px; }
.layout { height: 12px; padding: 0 6px; background: #363740; border-radius: 0 0 5px 5px; color: #c2c2c7; }
.layout.current { background: #474751; color: #fff; font-weight: 700; }
.status-tools { display: flex; gap: 2px; padding-right: 1px; }
.status-group { display: flex; background: #3f404a; }
.cell { width: 16px; justify-content: center; }
.cell.on { background: #7f95c2; margin: 1px 1px; width: 14px; }
.cell.drop { width: 10px; }
.cell.coords { width: 98px; }
.cell.space { width: 34px; }
.cell.ratio { width: 14px; }
.cell.units { width: 38px; }
.cell.units + .drop { width: 14px; }
.taskbar { display: flex; height: 6px; overflow: hidden; background: #101011; }
.task { height: 5px; background: #47484a; }
.task.first { width: 230px; margin-left: 31px; }
.task.second { width: 32px; margin-left: 230px; background: #343536; }
.clock { margin-left: auto; padding-right: 39px; line-height: 12px; color: #f2f2f2; }
</style>
